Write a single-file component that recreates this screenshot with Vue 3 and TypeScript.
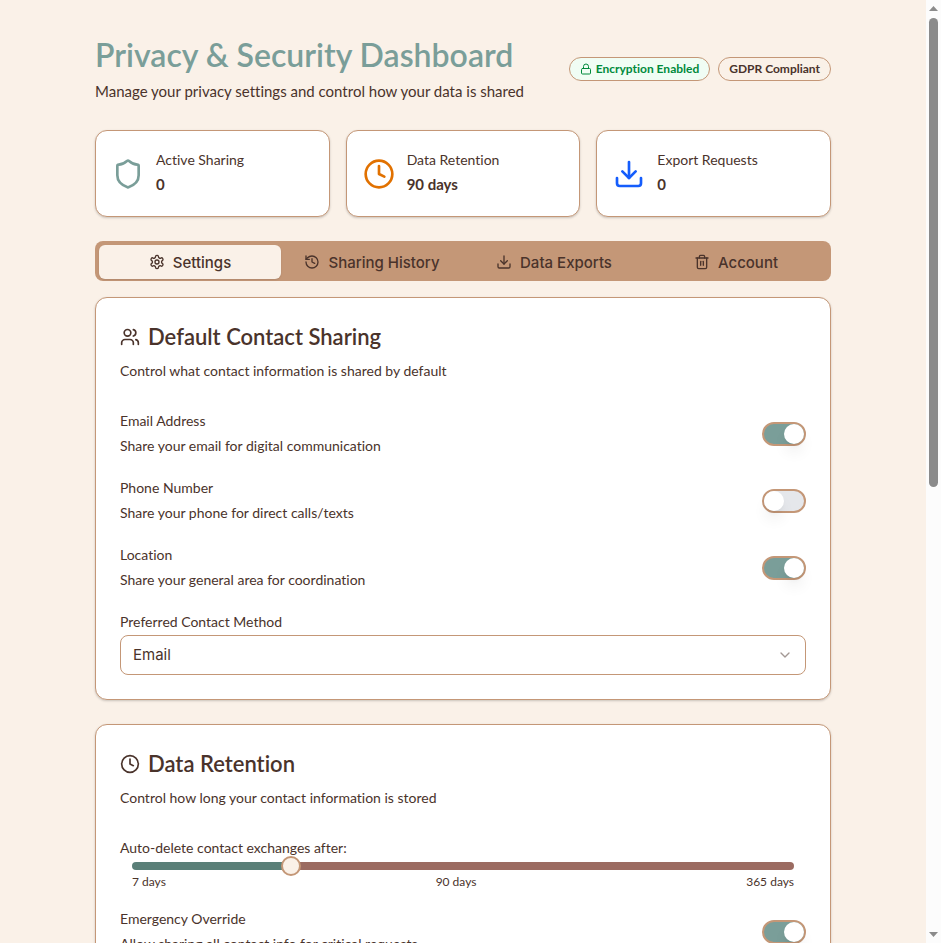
<script setup lang="ts">
import { computed, reactive, ref } from 'vue'

type Shape = string[]

const icons: Record<string, Shape> = {
  lock: ['M5 11h14a2 2 0 0 1 2 2v7a2 2 0 0 1-2 2H5a2 2 0 0 1-2-2v-7a2 2 0 0 1 2-2z', 'M7 11V7a5 5 0 0 1 10 0v4'],
  shield: ['M20 13c0 5-3.5 7.5-7.66 8.95a1 1 0 0 1-.67-.01C7.5 20.5 4 18 4 13V6a1 1 0 0 1 1-1c2 0 4.5-1.2 6.24-2.72a1.17 1.17 0 0 1 1.52 0C14.51 3.81 17 5 19 5a1 1 0 0 1 1 1z'],
  clock: ['M2 12a10 10 0 1 0 20 0a10 10 0 1 0-20 0', 'M12 6v6l4 2'],
  download: ['M21 15v4a2 2 0 0 1-2 2H5a2 2 0 0 1-2-2v-4', 'M7 10l5 5 5-5', 'M12 15V3'],
  settings: [
    'M12.22 2h-.44a2 2 0 0 0-2 2v.18a2 2 0 0 1-1 1.73l-.43.25a2 2 0 0 1-2 0l-.15-.08a2 2 0 0 0-2.73.73l-.22.38a2 2 0 0 0 .73 2.73l.15.1a2 2 0 0 1 1 1.72v.51a2 2 0 0 1-1 1.74l-.15.09a2 2 0 0 0-.73 2.73l.22.38a2 2 0 0 0 2.73.73l.15-.08a2 2 0 0 1 2 0l.43.25a2 2 0 0 1 1 1.73V20a2 2 0 0 0 2 2h.44a2 2 0 0 0 2-2v-.18a2 2 0 0 1 1-1.73l.43-.25a2 2 0 0 1 2 0l.15.08a2 2 0 0 0 2.73-.73l.22-.39a2 2 0 0 0-.73-2.73l-.15-.08a2 2 0 0 1-1-1.74v-.5a2 2 0 0 1 1-1.74l.15-.09a2 2 0 0 0 .73-2.73l-.22-.38a2 2 0 0 0-2.73-.73l-.15.08a2 2 0 0 1-2 0l-.43-.25a2 2 0 0 1-1-1.73V4a2 2 0 0 0-2-2z',
    'M9 12a3 3 0 1 0 6 0a3 3 0 1 0-6 0',
  ],
  history: ['M3 12a9 9 0 1 0 9-9 9.75 9.75 0 0 0-6.74 2.74L3 8', 'M3 3v5h5', 'M12 7v5l4 2'],
  trash: ['M3 6h18', 'M19 6v14a2 2 0 0 1-2 2H7a2 2 0 0 1-2-2V6', 'M8 6V4a2 2 0 0 1 2-2h4a2 2 0 0 1 2 2v2', 'M10 11v6', 'M14 11v6'],
  users: ['M16 21v-2a4 4 0 0 0-4-4H6a4 4 0 0 0-4 4v2', 'M5 7a4 4 0 1 0 8 0a4 4 0 1 0-8 0', 'M22 21v-2a4 4 0 0 0-3-3.87', 'M16 3.13a4 4 0 0 1 0 7.75'],
  chevron: ['M6 9l6 6 6-6'],
}

const days = ref(90)
const minDays = 7
const maxDays = 365
const method = ref('Email')
const activeTab = ref('settings')
const emergency = ref(true)

const stats = computed(() => [
  { icon: 'shield', tone: 'sage', label: 'Active Sharing', value: '0' },
  { icon: 'clock', tone: 'amber', label: 'Data Retention', value: `${days.value} days` },
  { icon: 'download', tone: 'blue', label: 'Export Requests', value: '0' },
])

const tabs = [
  { id: 'settings', icon: 'settings', label: 'Settings' },
  { id: 'history', icon: 'history', label: 'Sharing History' },
  { id: 'exports', icon: 'download', label: 'Data Exports' },
  { id: 'account', icon: 'trash', label: 'Account' },
]

const sharing = reactive([
  { id: 'email', label: 'Email Address', text: 'Share your email for digital communication', on: true },
  { id: 'phone', label: 'Phone Number', text: 'Share your phone for direct calls/texts', on: false },
  { id: 'location', label: 'Location', text: 'Share your general area for coordination', on: true },
])

const filled = computed(() => `${((days.value - minDays) / (maxDays - minDays)) * 100}%`)
</script>

<template>
  <div class="window">
    <div class="viewport">
      <main class="page">
        <header class="header">
          <div class="heading">
            <h1 class="title">Privacy &amp; Security Dashboard</h1>
            <p class="subtitle">Manage your privacy settings and control how your data is shared</p>
          </div>
          <div class="badges">
            <span class="badge badge-green">
              <svg class="icon icon-xs" viewBox="0 0 24 24"><path v-for="d in icons.lock" :key="d" :d="d" /></svg>
              Encryption Enabled
            </span>
            <span class="badge">GDPR Compliant</span>
          </div>
        </header>

        <section class="stats">
          <article v-for="stat in stats" :key="stat.label" class="card stat">
            <svg class="icon icon-lg" :class="stat.tone" viewBox="0 0 24 24">
              <path v-for="d in icons[stat.icon]" :key="d" :d="d" />
            </svg>
            <div class="stat-body">
              <p class="stat-label">{{ stat.label }}</p>
              <p class="stat-value">{{ stat.value }}</p>
            </div>
          </article>
        </section>

        <nav class="tabs" role="tablist">
          <button
            v-for="tab in tabs"
            :key="tab.id"
            type="button"
            role="tab"
            class="tab"
            :class="{ active: activeTab === tab.id }"
            :aria-selected="activeTab === tab.id"
            @click="activeTab = tab.id"
          >
            <svg class="icon icon-sm" viewBox="0 0 24 24"><path v-for="d in icons[tab.icon]" :key="d" :d="d" /></svg>
            {{ tab.label }}
          </button>
        </nav>

        <div class="panels">
          <section class="card panel">
            <h2 class="panel-title">
              <svg class="icon icon-md" viewBox="0 0 24 24"><path v-for="d in icons.users" :key="d" :d="d" /></svg>
              Default Contact Sharing
            </h2>
            <p class="panel-text">Control what contact information is shared by default</p>
            <div class="rows">
              <div v-for="row in sharing" :key="row.id" class="row">
                <div>
                  <label class="label" :for="row.id">{{ row.label }}</label>
                  <p class="text">{{ row.text }}</p>
                </div>
                <input :id="row.id" v-model="row.on" class="switch" type="checkbox" role="switch" />
              </div>
              <div>
                <label class="label" for="method">Preferred Contact Method</label>
                <div class="select-box">
                  <select id="method" v-model="method" class="select">
                    <option>Email</option>
                  </select>
                  <svg class="icon icon-sm chevron" viewBox="0 0 24 24"><path v-for="d in icons.chevron" :key="d" :d="d" /></svg>
                </div>
              </div>
            </div>
          </section>

          <section class="card panel">
            <h2 class="panel-title">
              <svg class="icon icon-md" viewBox="0 0 24 24"><path v-for="d in icons.clock" :key="d" :d="d" /></svg>
              Data Retention
            </h2>
            <p class="panel-text">Control how long your contact information is stored</p>
            <div class="rows">
              <div>
                <label class="label" for="days">Auto-delete contact exchanges after:</label>
                <div class="range-box">
                  <input
                    id="days"
                    v-model.number="days"
                    class="range"
                    type="range"
                    :min="minDays"
                    :max="maxDays"
                    :style="{ '--filled': filled }"
                  />
                  <div class="scale">
                    <span>{{ minDays }} days</span>
                    <span>{{ days }} days</span>
                    <span>{{ maxDays }} days</span>
                  </div>
                </div>
              </div>
              <div class="row">
                <div>
                  <label class="label" for="emergency">Emergency Override</label>
                  <p class="text">Allow sharing all contact info for critical requests</p>
                </div>
                <input id="emergency" v-model="emergency" class="switch" type="checkbox" role="switch" />
              </div>
            </div>
          </section>
        </div>
      </main>
    </div>

    <div class="scrollbar" aria-hidden="true">
      <svg class="arrow" viewBox="0 0 15 18"><path d="M3 11h9L7.500 6z" /></svg>
      <div class="rail">
        <div class="thumb"></div>
        <div class="rest"></div>
      </div>
      <svg class="arrow" viewBox="0 0 15 18"><path d="M3 7h9L7.500 12z" /></svg>
    </div>
  </div>
</template>

<style>
body {
  margin: 0;
  background: #faf1e8;
}
</style>

<style scoped>
.window {
  display: flex;
  height: 100vh;
  overflow: hidden;
  background: #faf1e8;
  color: #4a332b;
  font-family: Lato, 'Liberation Sans', sans-serif;
  font-size: 14px;
  font-variant-ligatures: none;
  line-height: 26px;
}
.viewport {
  flex: 1;
  min-width: 0;
  overflow: hidden;
}
.page {
  box-sizing: border-box;
  max-width: 768px;
  margin: 0 auto;
  padding: 32px 16px;
}
h1,
h2,
p {
  margin: 0;
}
.header {
  display: flex;
  align-items: center;
  justify-content: space-between;
  gap: 16px;
  margin-bottom: 24px;
}
.heading {
  padding-bottom: 2px;
}
.title {
  color: #7a9e99;
  font-size: 32px;
  font-weight: 600;
  line-height: 46px;
  white-space: nowrap;
}
.subtitle {
  font-size: 15px;
}
.badges {
  display: flex;
  gap: 8px;
}
.badge {
  display: flex;
  align-items: center;
  gap: 4px;
  box-sizing: border-box;
  height: 24px;
  padding: 0 10px;
  border: 1px solid #c49777;
  border-radius: 12px;
  font-size: 12px;
  font-weight: 700;
  white-space: nowrap;
}
.badge-green {
  background: #f0fdf4;
  color: #008a3c;
}
.icon {
  flex: none;
  fill: none;
  stroke: currentColor;
  stroke-width: 2;
  stroke-linecap: round;
  stroke-linejoin: round;
}
.icon-xs {
  width: 12px;
  height: 12px;
}
.icon-sm {
  width: 16px;
  height: 16px;
}
.icon-md {
  width: 20px;
  height: 20px;
}
.icon-lg {
  width: 32px;
  height: 32px;
}
.sage {
  color: #7a9e99;
}
.amber {
  color: #e17100;
}
.blue {
  color: #155dfc;
}
.card {
  border: 1px solid #c49777;
  border-radius: 12px;
  background: #fff;
  box-shadow: 0 1px 3px rgba(0, 0, 0, 0.1), 0 1px 2px rgba(0, 0, 0, 0.1);
}
.stats {
  display: grid;
  grid-template-columns: repeat(3, 1fr);
  gap: 16px;
  margin-bottom: 24px;
}
.stat {
  display: flex;
  align-items: center;
  gap: 12px;
  padding: 16px;
}
.stat-body {
  padding-bottom: 3px;
  line-height: 25px;
}
.stat-value {
  font-size: 15px;
  font-weight: 700;
}
.tabs {
  display: grid;
  grid-template-columns: repeat(4, 1fr);
  box-sizing: border-box;
  height: 40px;
  margin-bottom: 16px;
  padding: 4px 4px 2px;
  border-radius: 8px;
  background: #c49777;
}
.tab {
  display: flex;
  align-items: center;
  justify-content: center;
  gap: 8px;
  padding: 0;
  border: 0;
  border-radius: 6px;
  background: transparent;
  color: #4a332b;
  font-family: Inter, 'Liberation Sans', sans-serif;
  font-size: 15px;
  font-weight: 500;
}
.tab.active {
  background: #faf1e8;
  box-shadow: 0 1px 2px rgba(0, 0, 0, 0.1);
}
.panels {
  display: grid;
  gap: 24px;
}
.panel {
  padding: 24px;
}
.panel-title {
  display: flex;
  align-items: center;
  gap: 8px;
  margin-bottom: 6px;
  font-size: 22px;
  font-weight: 600;
  line-height: 30px;
}
.panel-text {
  margin-bottom: 24px;
}
.rows {
  display: grid;
  gap: 16px;
}
.row {
  display: flex;
  align-items: center;
  justify-content: space-between;
}
.label {
  display: block;
  line-height: 25px;
}
.switch {
  flex: none;
  box-sizing: border-box;
  width: 44px;
  height: 24px;
  margin: 0;
  border: 2px solid #c49777;
  border-radius: 12px;
  appearance: none;
  background: #e5e7eb;
}
.switch::before {
  content: '';
  display: block;
  width: 20px;
  height: 20px;
  border-radius: 10px;
  background: #fff;
  box-shadow: 0 10px 15px -3px rgba(0, 0, 0, 0.1), 0 4px 6px -4px rgba(0, 0, 0, 0.1);
}
.switch:checked {
  background: #7a9e99;
}
.switch:checked::before {
  margin-left: auto;
}
.select-box {
  display: grid;
  align-items: center;
  margin-top: 1px;
}
.select,
.chevron {
  grid-area: 1 / 1;
}
.select {
  box-sizing: border-box;
  width: 100%;
  height: 40px;
  padding: 0 12px 2px;
  border: 1px solid #c49777;
  border-radius: 8px;
  appearance: none;
  background: #fff;
  color: #4a332b;
  font-family: Inter, 'Liberation Sans', sans-serif;
  font-size: 15px;
}
.chevron {
  justify-self: end;
  margin-right: 13px;
  opacity: 0.5;
  pointer-events: none;
}
.range-box {
  padding: 2px 12px 0;
}
.range {
  display: block;
  width: 100%;
  height: 8px;
  margin: 0;
  border-radius: 4px;
  appearance: none;
  background: linear-gradient(to right, #5a7f78 var(--filled), #9b6b61 var(--filled));
}
.range::-webkit-slider-thumb {
  box-sizing: border-box;
  width: 20px;
  height: 20px;
  border: 2px solid #c49777;
  border-radius: 10px;
  appearance: none;
  background: #faf1e8;
}
.scale {
  display: flex;
  justify-content: space-between;
  padding-top: 4px;
  font-size: 12px;
  line-height: 16px;
}
.scrollbar {
  display: flex;
  flex: none;
  flex-direction: column;
  width: 15px;
  background: #fcfcfc;
}
.arrow {
  flex: none;
  width: 15px;
  height: 18px;
  fill: #8b8b8b;
}
.rail {
  display: flex;
  flex: 1;
  flex-direction: column;
  padding: 0 3px;
}
.thumb {
  flex: 15;
  border-radius: 5px;
  background: #8b8b8b;
}
.rest {
  flex: 14;
}
</style>
